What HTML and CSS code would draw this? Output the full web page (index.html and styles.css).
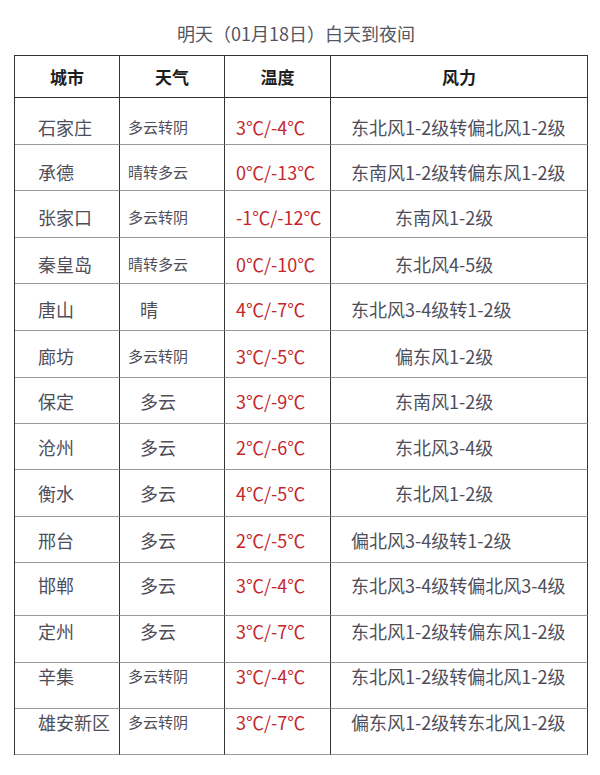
FILE: index.html
```html
<!DOCTYPE html>
<html lang="zh-CN">
<head>
<meta charset="utf-8">
<title>明天（01月18日）白天到夜间</title>
<link rel="stylesheet" href="styles.css">
</head>
<body>
<div class="page">
  <h1 class="title">明天（01月18日）白天到夜间</h1>
  <div class="table">
    <div class="row head">
      <div class="cell">城市</div>
      <div class="cell">天气</div>
      <div class="cell">温度</div>
      <div class="cell">风力</div>
    </div>
    <div class="row r1">
      <div class="cell city">石家庄</div>
      <div class="cell wx small">多云转阴</div>
      <div class="cell temp">3℃/-4℃</div>
      <div class="cell wind">东北风1-2级转偏北风1-2级</div>
    </div>
    <div class="row r2">
      <div class="cell city">承德</div>
      <div class="cell wx small">晴转多云</div>
      <div class="cell temp">0℃/-13℃</div>
      <div class="cell wind">东南风1-2级转偏东风1-2级</div>
    </div>
    <div class="row r3">
      <div class="cell city">张家口</div>
      <div class="cell wx small">多云转阴</div>
      <div class="cell temp">-1℃/-12℃</div>
      <div class="cell wind short">东南风1-2级</div>
    </div>
    <div class="row r3">
      <div class="cell city">秦皇岛</div>
      <div class="cell wx small">晴转多云</div>
      <div class="cell temp">0℃/-10℃</div>
      <div class="cell wind short">东北风4-5级</div>
    </div>
    <div class="row r4">
      <div class="cell city">唐山</div>
      <div class="cell wx">晴</div>
      <div class="cell temp">4℃/-7℃</div>
      <div class="cell wind">东北风3-4级转1-2级</div>
    </div>
    <div class="row r4">
      <div class="cell city">廊坊</div>
      <div class="cell wx small">多云转阴</div>
      <div class="cell temp">3℃/-5℃</div>
      <div class="cell wind short">偏东风1-2级</div>
    </div>
    <div class="row">
      <div class="cell city">保定</div>
      <div class="cell wx">多云</div>
      <div class="cell temp">3℃/-9℃</div>
      <div class="cell wind short">东南风1-2级</div>
    </div>
    <div class="row">
      <div class="cell city">沧州</div>
      <div class="cell wx">多云</div>
      <div class="cell temp">2℃/-6℃</div>
      <div class="cell wind short">东北风3-4级</div>
    </div>
    <div class="row">
      <div class="cell city">衡水</div>
      <div class="cell wx">多云</div>
      <div class="cell temp">4℃/-5℃</div>
      <div class="cell wind short">东北风1-2级</div>
    </div>
    <div class="row">
      <div class="cell city">邢台</div>
      <div class="cell wx">多云</div>
      <div class="cell temp">2℃/-5℃</div>
      <div class="cell wind">偏北风3-4级转1-2级</div>
    </div>
    <div class="row up1">
      <div class="cell city">邯郸</div>
      <div class="cell wx">多云</div>
      <div class="cell temp">3℃/-4℃</div>
      <div class="cell wind">东北风3-4级转偏北风3-4级</div>
    </div>
    <div class="row up2">
      <div class="cell city">定州</div>
      <div class="cell wx">多云</div>
      <div class="cell temp">3℃/-7℃</div>
      <div class="cell wind">东北风1-2级转偏东风1-2级</div>
    </div>
    <div class="row up3">
      <div class="cell city">辛集</div>
      <div class="cell wx small">多云转阴</div>
      <div class="cell temp">3℃/-4℃</div>
      <div class="cell wind">东北风1-2级转偏北风1-2级</div>
    </div>
    <div class="row up3">
      <div class="cell city">雄安新区</div>
      <div class="cell wx small">多云转阴</div>
      <div class="cell temp">3℃/-7℃</div>
      <div class="cell wind">偏东风1-2级转东北风1-2级</div>
    </div>
  </div>
</div>
</body>
</html>
```

FILE: styles.css
```css
html, body {
  margin: 0;
  padding: 0;
  background: #ffffff;
}

body {
  font-family: "Noto Sans CJK SC", "Noto Sans", sans-serif;
  color: #4e4e5a;
}

.page {
  width: 600px;
  padding: 21px 0 0 14px;
  box-sizing: border-box;
}

.title {
  margin: 0 0 10px 0;
  padding-right: 22px;
  font-size: 18px;
  font-weight: 400;
  line-height: 24px;
  text-align: center;
  color: #55555f;
}

.table {
  display: grid;
  width: 574px;
  box-sizing: border-box;
  grid-template-columns: 105px 105px 106px 257px;
  grid-template-rows: 42px 47px 46px 47px 46px 47px 47px 46px 46px 47px 46px 53px 47px 46px 46px;
  border-left: 1px solid #333;
  border-top: 1px solid #333;
}

.row {
  display: contents;
}

.cell {
  display: flex;
  align-items: center;
  box-sizing: border-box;
  border-right: 1px solid #333;
  border-bottom: 1px solid #9a9a9a;
  font-size: 18px;
  line-height: 24px;
  white-space: nowrap;
}

.head .cell {
  justify-content: center;
  font-size: 17px;
  font-weight: 700;
  color: #1e1e1e;
  border-bottom-color: #333;
}

.city {
  padding-left: 23px;
}

.wx {
  padding-left: 20px;
}

.wx.small {
  padding-left: 8px;
  font-size: 15px;
}

.temp {
  padding-left: 11px;
  color: #c4262c;
}

.wind {
  padding-left: 20px;
}

.wind.short {
  padding-left: 64px;
}

.r1 > .cell { padding-top: 12px; }
.r2 > .cell { padding-top: 9px; }
.r3 > .cell { padding-top: 6px; }
.r4 > .cell { padding-top: 3px; }

.up1 > .cell { padding-bottom: 9px; }
.up2 > .cell { padding-bottom: 17px; }
.up3 > .cell { padding-bottom: 20px; }
```
